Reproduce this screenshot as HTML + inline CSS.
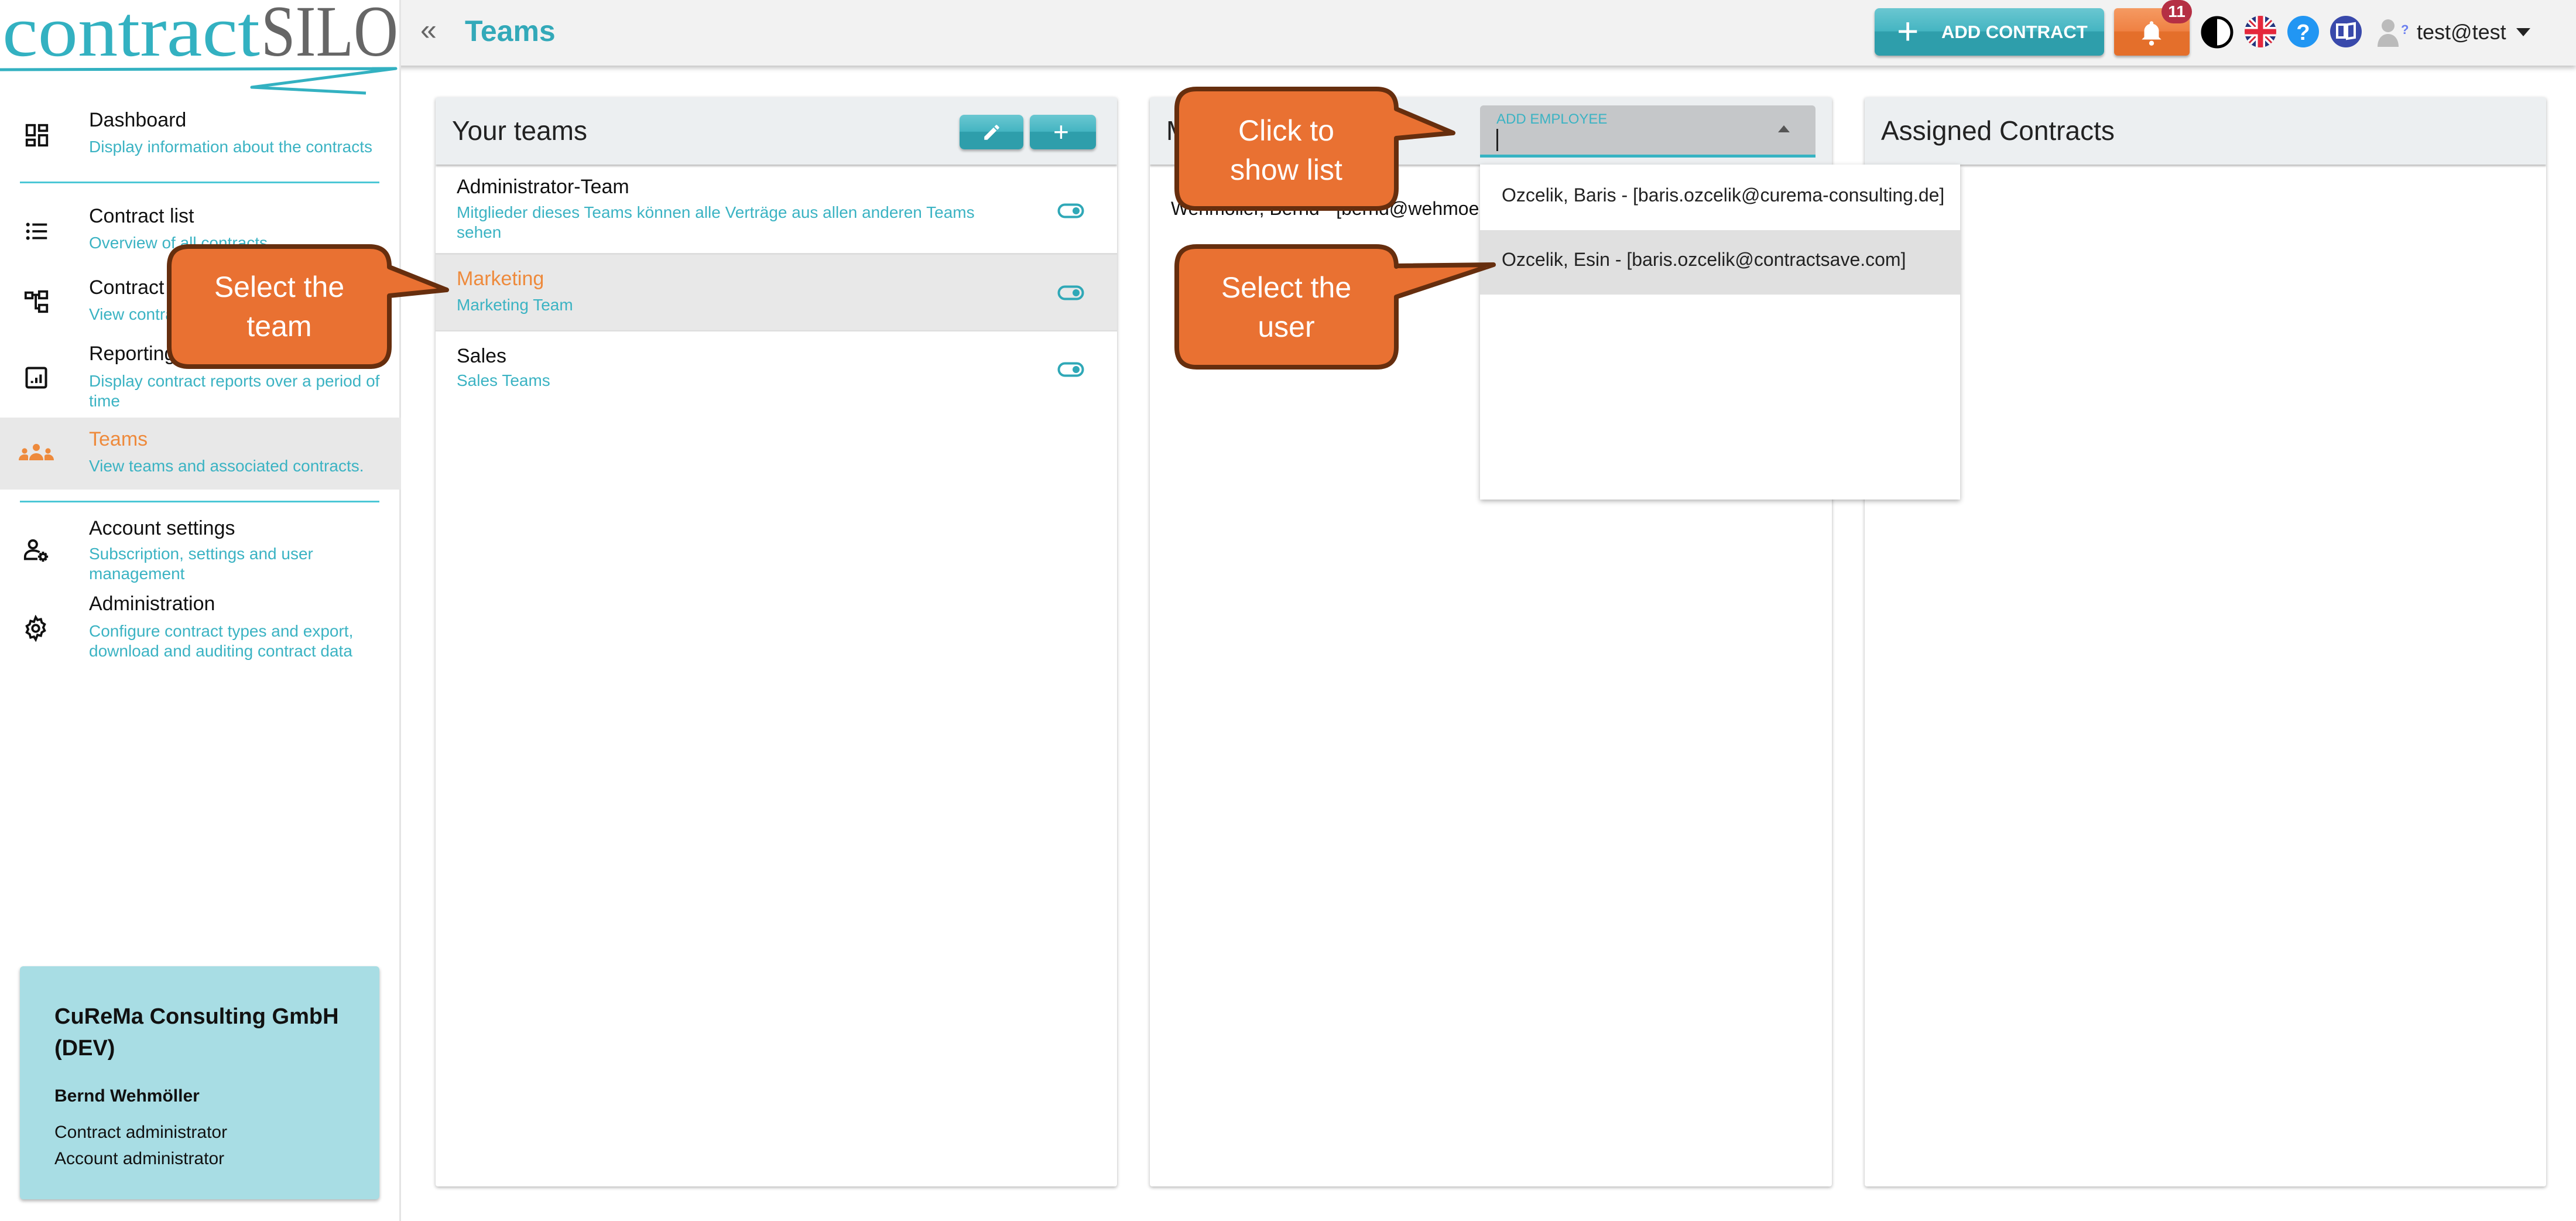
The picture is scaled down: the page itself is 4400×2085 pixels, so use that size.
<!DOCTYPE html>
<html><head><meta charset="utf-8"><style>
*{margin:0;padding:0;box-sizing:border-box}
body{width:4400px;height:2085px;position:relative;overflow:hidden;background:#fff;font-family:"Liberation Sans",sans-serif}
.abs{position:absolute}
.t{position:absolute;white-space:nowrap}
.nt{font-size:34px;color:#111;left:152px}
.nd{font-size:28px;color:#3bb3c3;left:152px;line-height:34px}
.panel{position:absolute;top:166px;height:1860px;background:#fff;box-shadow:0 2px 6px rgba(0,0,0,.3);border-radius:4px;overflow:hidden}
.ph{position:absolute;left:0;top:0;right:0;height:115px;background:#eceff1;box-shadow:0 3px 3px rgba(0,0,0,.25)}
.ptitle{position:absolute;left:28px;top:30px;font-size:46px;color:#222}
.btn{position:absolute;border-radius:8px;background:linear-gradient(#6ac7d1 0%,#45b5c2 48%,#2e9eab 50%,#2e9eab 100%);box-shadow:0 3px 4px rgba(0,0,0,.3)}
</style></head><body>
<div class="abs" style="left:0;top:0;width:4400px;height:112px;background:#f2f2f2;box-shadow:0 4px 8px rgba(0,0,0,.25)"></div>
<div class="abs" style="left:0;top:0;width:685px;height:2085px;background:#fff;border-right:3px solid #e4e4e4"></div>
<svg class="abs" style="left:0;top:0" width="685" height="170">
<text x="4" y="95" font-family="Liberation Serif" font-size="124" fill="#33b1c1" textLength="440" lengthAdjust="spacingAndGlyphs">contract</text>
<text x="446" y="95" font-family="Liberation Serif" font-size="124" fill="#666" textLength="234" lengthAdjust="spacingAndGlyphs">SILO</text>
<path d="M0 119 L676 117 L430 149 L625 159" fill="none" stroke="#33b1c1" stroke-width="5" stroke-linejoin="round"/>
</svg>
<div class="t" style="left:718px;top:22px;font-size:50px;color:#666">«</div>
<div class="t" style="left:794px;top:24px;font-size:50px;font-weight:bold;color:#33a9b9">Teams</div>

<svg class="abs" style="left:40px;top:208px" width="46" height="46" viewBox="0 0 24 24" fill="none" stroke="#111" stroke-width="2"><rect x="3" y="3" width="7" height="9"/><rect x="14" y="3" width="7" height="5"/><rect x="14" y="12" width="7" height="9"/><rect x="3" y="16" width="7" height="5"/></svg>
<div class="t nt" style="top:186px">Dashboard</div>
<div class="t nd" style="top:234px">Display information about the contracts</div>
<div class="abs" style="left:34px;top:310px;width:614px;height:3px;background:#4cc7d6"></div>

<svg class="abs" style="left:40px;top:372px" width="46" height="46" viewBox="0 0 24 24" fill="#111"><circle cx="4" cy="6" r="1.6"/><circle cx="4" cy="12" r="1.6"/><circle cx="4" cy="18" r="1.6"/><rect x="8" y="5" width="13" height="2"/><rect x="8" y="11" width="13" height="2"/><rect x="8" y="17" width="13" height="2"/></svg>
<div class="t nt" style="top:350px">Contract list</div>
<div class="t nd" style="top:398px">Overview of all contracts</div>

<svg class="abs" style="left:40px;top:492px" width="46" height="46" viewBox="0 0 24 24" fill="none" stroke="#111" stroke-width="2"><rect x="2" y="4" width="6" height="5"/><rect x="14" y="3" width="7" height="6"/><rect x="14" y="15" width="7" height="6"/><path d="M8 6h6M11 6v12h3"/></svg>
<div class="t nt" style="top:472px">Contract management</div>
<div class="t nd" style="top:520px">View contract dependencies</div>

<svg class="abs" style="left:40px;top:623px" width="44" height="44" viewBox="0 0 24 24" fill="none" stroke="#111" stroke-width="2.2"><rect x="3" y="3" width="18" height="18" rx="1.5"/><path d="M8 17v-2M12 17v-5M16 17v-8"/></svg>
<div class="t nt" style="top:585px">Reporting</div>
<div class="t nd" style="top:634px;white-space:normal;width:510px">Display contract reports over a period of time</div>

<div class="abs" style="left:0;top:713px;width:685px;height:123px;background:#e8e8e8"></div>
<svg class="abs" style="left:32px;top:754px" width="60" height="40" viewBox="0 0 30 20" fill="#ee8a3c"><circle cx="15" cy="5" r="3"/><path d="M9 16c0-4 3-6 6-6s6 2 6 6z"/><circle cx="5" cy="8" r="2.3"/><path d="M0 16c0-3 2-5 5-5s3 1 3 2v3z"/><circle cx="25" cy="8" r="2.3"/><path d="M30 16c0-3-2-5-5-5s-3 1-3 2v3z"/></svg>
<div class="t nt" style="top:731px;color:#ee8a3c">Teams</div>
<div class="t nd" style="top:779px">View teams and associated contracts.</div>
<div class="abs" style="left:34px;top:855px;width:614px;height:3px;background:#4cc7d6"></div>

<svg class="abs" style="left:38px;top:918px" width="48" height="46" viewBox="0 0 24 24" fill="none" stroke="#111" stroke-width="2"><circle cx="9" cy="6" r="3.5"/><path d="M15 13c-2-1-4-1.5-6-1.5-4 0-7 2.5-7 5.5v2h11"/><circle cx="18" cy="17" r="2.5"/><path d="M18 12.5v2M18 19.5v2M13.5 17h2M20.5 17h2M15 14l1.2 1.2M19.8 18.8L21 20M15 20l1.2-1.2M19.8 15.2L21 14"/></svg>
<div class="t nt" style="top:883px">Account settings</div>
<div class="t nd" style="top:929px;white-space:normal;width:460px">Subscription, settings and user management</div>

<svg class="abs" style="left:38px;top:1050px" width="46" height="46" viewBox="0 0 24 24" fill="none" stroke="#111" stroke-width="2"><circle cx="12" cy="12" r="3"/><path d="M12 2l1.6 2.6 3-.8.8 3 2.6 1.6-1.3 2.8 1.3 2.8-2.6 1.6-.8 3-3-.8L12 22l-1.6-2.6-3 .8-.8-3L4 15.6l1.3-2.8L4 10l2.6-1.6.8-3 3 .8z"/></svg>
<div class="t nt" style="top:1012px">Administration</div>
<div class="t nd" style="top:1061px;white-space:normal;width:540px">Configure contract types and export, download and auditing contract data</div>

<div class="abs" style="left:34px;top:1650px;width:614px;height:398px;background:#a8dde4;border-radius:6px;box-shadow:0 3px 6px rgba(0,0,0,.3)"></div>
<div class="t" style="left:93px;top:1709px;font-size:38px;font-weight:bold;color:#111;line-height:54px">CuReMa Consulting GmbH<br>(DEV)</div>
<div class="t" style="left:93px;top:1855px;font-size:30px;font-weight:bold;color:#111">Bernd Wehmöller</div>
<div class="t" style="left:93px;top:1911px;font-size:30px;color:#111;line-height:45px">Contract administrator<br>Account administrator</div>

<div class="btn" style="left:3202px;top:14px;width:392px;height:81px"></div>
<div class="t" style="left:3240px;top:16px;font-size:64px;color:#fff;font-weight:300">+</div>
<div class="t" style="left:3316px;top:37px;font-size:31px;color:#fff;font-weight:bold">ADD CONTRACT</div>
<div class="abs" style="left:3611px;top:14px;width:129px;height:81px;border-radius:6px;background:linear-gradient(#f59a62 0%,#ef8143 48%,#e46f2b 50%,#e46f2b 100%);box-shadow:0 3px 4px rgba(0,0,0,.3)"></div>
<svg class="abs" style="left:3650px;top:30px" width="50" height="50" viewBox="0 0 24 24" fill="#fff"><path d="M12 3a1.5 1.5 0 011.5 1.5v.7A6 6 0 0118 11v5l2 2H4l2-2v-5a6 6 0 014.5-5.8v-.7A1.5 1.5 0 0112 3z"/><circle cx="12" cy="21" r="2"/></svg>
<div class="abs" style="left:3692px;top:0px;width:52px;height:40px;border-radius:20px;background:#b52f44;color:#fff;font-size:28px;text-align:center;line-height:40px;font-weight:bold">11</div>
<svg class="abs" style="left:3758px;top:26px" width="58" height="58" viewBox="0 0 58 58"><circle cx="29" cy="29" r="25" fill="#fff" stroke="#000" stroke-width="5"/><path d="M29 4a25 25 0 000 50z" fill="#000"/></svg>
<svg class="abs" style="left:3833px;top:26px" width="56" height="56" viewBox="0 0 56 56"><defs><clipPath id="c"><circle cx="28" cy="28" r="27"/></clipPath></defs><g clip-path="url(#c)"><rect width="56" height="56" fill="#25357e"/><path d="M0 0L56 56M56 0L0 56" stroke="#fff" stroke-width="10"/><path d="M0 0L56 56M56 0L0 56" stroke="#d8283a" stroke-width="3"/><path d="M28 0v56M0 28h56" stroke="#fff" stroke-width="16"/><path d="M28 0v56M0 28h56" stroke="#e5283c" stroke-width="9"/></g></svg>
<svg class="abs" style="left:3906px;top:26px" width="56" height="56" viewBox="0 0 56 56"><circle cx="28" cy="28" r="27" fill="#2196f3"/><text x="28" y="42" text-anchor="middle" font-family="Liberation Sans" font-weight="bold" font-size="38" fill="#fff">?</text></svg>
<svg class="abs" style="left:3979px;top:26px" width="56" height="56" viewBox="0 0 56 56"><circle cx="28" cy="28" r="27" fill="#3949ab"/><path d="M13 16h13v22H13zM30 16l13-2v24l-13 2z" fill="none" stroke="#fff" stroke-width="4"/></svg>
<svg class="abs" style="left:4057px;top:30px" width="60" height="52" viewBox="0 0 60 52"><circle cx="22" cy="14" r="11" fill="#bbb"/><path d="M4 50c0-14 8-22 18-22s18 8 18 22z" fill="#bbb"/><text x="44" y="28" font-family="Liberation Sans" font-weight="bold" font-size="22" fill="#6b7ff0">?</text></svg>
<div class="t" style="left:4128px;top:34px;font-size:36px;color:#222">test@test</div>
<div class="abs" style="left:4298px;top:48px;width:0;height:0;border-left:12px solid transparent;border-right:12px solid transparent;border-top:14px solid #222"></div>

<div class="panel" style="left:744px;width:1164px">
 <div class="ph"><div class="ptitle">Your teams</div></div>
 <div class="btn" style="left:895px;top:30px;width:109px;height:59px"></div>
 <svg class="abs" style="left:933px;top:43px" width="34" height="34" viewBox="0 0 24 24" fill="#fff"><path d="M3 17.3V21h3.7L17.8 9.9l-3.7-3.7zM20.7 7c.4-.4.4-1 0-1.4l-2.3-2.3c-.4-.4-1-.4-1.4 0l-1.8 1.8 3.7 3.7z"/></svg>
 <div class="btn" style="left:1015px;top:30px;width:113px;height:59px"></div>
 <div class="t" style="left:1055px;top:32px;font-size:46px;color:#fff">+</div>
 <div class="t" style="left:36px;top:134px;font-size:34px;color:#111">Administrator-Team</div>
 <div class="t" style="left:36px;top:180px;font-size:28px;color:#3bb3c3;line-height:34px">Mitglieder dieses Teams können alle Verträge aus allen anderen Teams<br>sehen</div>
 <div class="abs" style="left:0;top:266px;width:1164px;height:3px;background:#ddd"></div>
 <div class="abs" style="left:0;top:269px;width:1164px;height:129px;background:#e8e8e8"></div>
 <div class="abs" style="left:0;top:398px;width:1164px;height:2px;background:#ddd"></div>
 <div class="t" style="left:36px;top:291px;font-size:34px;color:#ee8a3c">Marketing</div>
 <div class="t" style="left:36px;top:339px;font-size:28px;color:#3bb3c3">Marketing Team</div>
 <div class="t" style="left:36px;top:423px;font-size:34px;color:#111">Sales</div>
 <div class="t" style="left:36px;top:468px;font-size:28px;color:#3bb3c3">Sales Teams</div>
 <svg class="abs" style="left:1062px;top:181px" width="46" height="26"><rect x="2.5" y="2.5" width="41" height="21" rx="10.5" fill="none" stroke="#2fa8b7" stroke-width="4"/><circle cx="32" cy="13" r="6" fill="#2fa8b7"/></svg>
 <svg class="abs" style="left:1062px;top:321px" width="46" height="26"><rect x="2.5" y="2.5" width="41" height="21" rx="10.5" fill="none" stroke="#2fa8b7" stroke-width="4"/><circle cx="32" cy="13" r="6" fill="#2fa8b7"/></svg>
 <svg class="abs" style="left:1062px;top:452px" width="46" height="26"><rect x="2.5" y="2.5" width="41" height="21" rx="10.5" fill="none" stroke="#2fa8b7" stroke-width="4"/><circle cx="32" cy="13" r="6" fill="#2fa8b7"/></svg>
</div>

<div class="panel" style="left:1964px;width:1165px">
 <div class="ph"><div class="ptitle">Members</div></div>
 <div class="t" style="left:36px;top:172px;font-size:32px;color:#111">Wehmöller, Bernd - [bernd@wehmoeller.de]</div>
</div>
<div class="panel" style="left:3185px;width:1164px">
 <div class="ph"><div class="ptitle">Assigned Contracts</div></div>
</div>

<div class="abs" style="left:2528px;top:180px;width:573px;height:89px;background:#c5c7c9;border-radius:6px 6px 0 0;border-bottom:5px solid #36b3c2"></div>
<div class="t" style="left:2556px;top:190px;font-size:24px;color:#3bb3c3">ADD EMPLOYEE</div>
<div class="abs" style="left:2556px;top:220px;width:3px;height:38px;background:#222"></div>
<div class="abs" style="left:3037px;top:214px;width:0;height:0;border-left:10px solid transparent;border-right:10px solid transparent;border-bottom:12px solid #555"></div>
<div class="abs" style="left:2528px;top:281px;width:820px;height:572px;background:#fff;box-shadow:0 3px 8px rgba(0,0,0,.3)"></div>
<div class="abs" style="left:2528px;top:393px;width:820px;height:110px;background:#e0e0e0"></div>
<div class="t" style="left:2565px;top:315px;font-size:32px;color:#222">Ozcelik, Baris - [baris.ozcelik@curema-consulting.de]</div>
<div class="t" style="left:2565px;top:425px;font-size:32px;color:#222">Ozcelik, Esin - [baris.ozcelik@contractsave.com]</div>

<svg class="abs" style="left:0;top:0" width="4400" height="2085">
 <g fill="#e97132" stroke="#662e0e" stroke-width="8" stroke-linejoin="round">
  <path d="M323 421 H631 Q665 421 665 455 V456 L763 495 L665 505 V592 Q665 626 631 626 H323 Q289 626 289 592 V455 Q289 421 323 421 Z"/>
  <path d="M2044 152 H2351 Q2385 152 2385 186 L2482 227 L2385 236 V322 Q2385 356 2351 356 H2044 Q2010 356 2010 322 V186 Q2010 152 2044 152 Z"/>
  <path d="M2044 421 H2351 Q2385 421 2385 455 V454 L2551 452 L2385 507 V593 Q2385 627 2351 627 H2044 Q2010 627 2010 593 V455 Q2010 421 2044 421 Z"/>
 </g>
 <g font-family="Liberation Sans" font-size="50" fill="#fff" text-anchor="middle">
  <text x="477" y="507">Select the</text><text x="477" y="574">team</text>
  <text x="2197" y="240">Click to</text><text x="2197" y="307">show list</text>
  <text x="2197" y="508">Select the</text><text x="2197" y="575">user</text>
 </g>
</svg>
</body></html>
